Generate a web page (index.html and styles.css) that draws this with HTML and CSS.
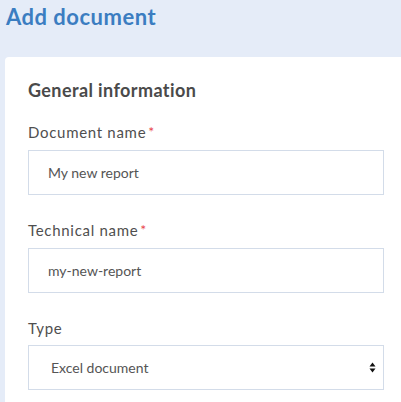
FILE: index.html
```html
<!DOCTYPE html>
<html>
<head>
<meta charset="utf-8">
<link rel="stylesheet" href="styles.css">
</head>
<body>
<h1 class="page-title">Add document</h1>
<div class="card">
  <h2 class="section-title">General information</h2>
  <div class="field">
    <label class="label">Document name<span class="req">*</span></label>
    <input class="control" type="text" value="My new report">
  </div>
  <div class="field">
    <label class="label">Technical name<span class="req">*</span></label>
    <input class="control" type="text" value="my-new-report">
  </div>
  <div class="field">
    <label class="label">Type</label>
    <div class="select-wrap">
      <select class="control select">
        <option>Excel document</option>
      </select>
      <svg class="arrows" width="7" height="11" viewBox="0 0 7 11"><path d="M3.5 0.5 L6.5 4.5 L0.5 4.5 Z M0.5 6.5 L6.5 6.5 L3.5 10.5 Z" fill="#111"/></svg>
    </div>
  </div>
</div>
</body>
</html>
```
FILE: styles.css
```css
html, body {
  margin: 0;
  padding: 0;
}
body {
  background: #e5ecf8;
  font-family: Lato, "Open Sans", sans-serif;
  height: 402px;
  overflow: hidden;
}
.page-title {
  margin: 0;
  padding: 2px 0 0 6px;
  font-size: 22px;
  line-height: 30px;
  font-weight: 700;
  letter-spacing: 0.5px;
  color: #3b7dc1;
}
.card {
  margin: 25px 0 0 5px;
  background: #fff;
  border-radius: 4px 0 0 0;
  padding: 21px 17px 40px 23px;
}
.section-title {
  margin: 0 0 20px 0;
  font-size: 18px;
  line-height: 24px;
  font-weight: 700;
  letter-spacing: 0.4px;
  color: #4a4a4a;
}
.field {
  display: flex;
  flex-direction: column;
  margin-bottom: 25px;
}
.label {
  font-size: 15px;
  line-height: 20px;
  letter-spacing: 0.7px;
  color: #4f4f4f;
  margin-bottom: 7px;
}
.req {
  color: #e8464a;
  font-size: 14px;
  margin-left: 2px;
  position: relative;
  top: -1px;
}
.control {
  box-sizing: border-box;
  width: 100%;
  height: 45px;
  border: 1px solid #d3dce9;
  border-radius: 0;
  padding: 0 0 0 19px;
  font-family: Lato, "Open Sans", sans-serif;
  font-size: 14px;
  color: #555;
  background: #fff;
  outline: none;
  margin: 0;
}
.select-wrap {
  position: relative;
}
.select {
  appearance: none;
  -webkit-appearance: none;
  padding-left: 22px;
  display: block;
}
.arrows {
  position: absolute;
  right: 8px;
  top: 17px;
}
```
